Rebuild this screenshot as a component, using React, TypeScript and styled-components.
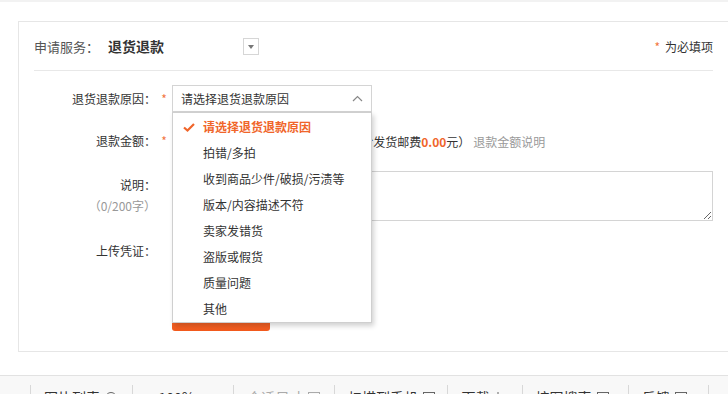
import React from "react";
import styled, { createGlobalStyle } from "styled-components";

const Global = createGlobalStyle`
  html, body { margin: 0; padding: 0; overflow: hidden; background: #fff; }
  body { font-family: "Noto Sans CJK SC", "Noto Sans", sans-serif; font-size: 12px; color: #333; }
  * { box-sizing: border-box; }
`;

const Page = styled.div`
  width: 728px;
  height: 394px;
  border-top: 2px solid #f2f2f2;
  overflow: hidden;
`;

const Wrap = styled.div`
  padding: 19px 0 0 18px;
`;

const Card = styled.div`
  width: 712px;
  border: 1px solid #e6e6e6;
  padding: 0 16px 20px 15px;
`;

const Header = styled.div`
  height: 49px;
  display: flex;
  align-items: center;
  border-bottom: 1px solid #e8e8e8;
`;

const HeadLabel = styled.span`
  font-size: 13px;
  color: #555;
  width: 74px;
`;

const HeadValue = styled.span`
  font-size: 14px;
  font-weight: bold;
  color: #333;
  width: 135px;
`;

const MiniSelect = styled.span`
  width: 16px;
  height: 17px;
  border: 1px solid #d6d6d6;
  display: flex;
  align-items: center;
  justify-content: center;
  margin-top: 1px;
  &::after {
    content: "";
    border-left: 3px solid transparent;
    border-right: 3px solid transparent;
    border-top: 4px solid #777;
  }
`;

const Required = styled.span`
  margin-left: auto;
  font-size: 12px;
  color: #333;
  display: flex;
  align-items: center;
  gap: 5px;
`;

const Star = styled.span`
  color: #f2773f;
  font-size: 12px;
`;

const Form = styled.div`
  padding-top: 14px;
`;

const Row = styled.div<{ $mt?: number; $align?: string }>`
  display: flex;
  align-items: ${(p) => p.$align || "center"};
  margin-top: ${(p) => p.$mt || 0}px;
`;

const Label = styled.div<{ $pt?: number }>`
  width: 122px;
  text-align: right;
  font-size: 12px;
  line-height: 20px;
  color: #333;
  padding-top: ${(p) => p.$pt || 0}px;
`;

const Sub = styled.div`
  color: #999;
  line-height: 22px;
`;

const StarCol = styled.div`
  width: 16px;
  text-align: center;
  line-height: 20px;
  color: #f2773f;
`;

const SelectWrap = styled.div`
  position: relative;
  width: 200px;
`;

const SelectBox = styled.div`
  height: 27px;
  border: 1px solid #d4d4d4;
  display: flex;
  align-items: center;
  padding: 0 8px 0 8px;
  justify-content: space-between;
  color: #333;
`;

const Menu = styled.ul`
  position: absolute;
  left: 0;
  top: 27px;
  width: 200px;
  margin: 0;
  padding: 1px 0 0;
  list-style: none;
  background: #fff;
  border: 1px solid #cfcfcf;
  box-shadow: 2px 3px 5px rgba(0, 0, 0, 0.18);
  z-index: 10;
`;

const Item = styled.li<{ $active?: boolean }>`
  position: relative;
  height: 26px;
  line-height: 26px;
  padding-left: 30px;
  font-size: 12px;
  color: ${(p) => (p.$active ? "#f0652a" : "#333")};
  font-weight: ${(p) => (p.$active ? "bold" : "normal")};
`;

const Check = styled.svg`
  position: absolute;
  left: 10px;
  top: 9px;
`;

const Field = styled.div`
  display: flex;
  align-items: center;
  gap: 6px;
`;

const Input = styled.div`
  width: 86px;
  height: 26px;
  border: 1px solid #d4d4d4;
`;

const Money = styled.b`
  color: #f0652a;
`;

const Muted = styled.span`
  color: #999;
  margin-left: -3px;
`;

const TextArea = styled.textarea`
  width: 541px;
  height: 50px;
  border: 1px solid #d4d4d4;
  margin: 0;
  padding: 4px;
  font-family: inherit;
  font-size: 12px;
`;

const UploadBtn = styled.div`
  width: 90px;
  height: 26px;
  border: 1px solid #d4d4d4;
`;

const Submit = styled.div`
  width: 98px;
  height: 30px;
  border-radius: 3px;
  background: linear-gradient(#ff7a3d, #f25a1d);
  margin-left: 138px;
`;

const Toolbar = styled.div`
  margin-top: 23px;
  border-top: 1px solid #e2e2e2;
  background: #f8f8f8;
  height: 20px;
  padding: 9px 0 0 30px;
  display: flex;
`;

const Tool = styled.div<{ $dim?: boolean; $w: number }>`
  width: ${(p) => p.$w}px;
  height: 30px;
  border-left: 1px solid #d8d8d8;
  display: flex;
  gap: 5px;
  padding-left: 13px;
  align-items: flex-start;
  font-size: 14px;
  line-height: 20px;
  padding-top: 2px;
  color: ${(p) => (p.$dim ? "#aaa" : "#333")};
  svg { margin-top: 5px; flex: none; }
`;

const reasons = [
  "请选择退货退款原因",
  "拍错/多拍",
  "收到商品少件/破损/污渍等",
  "版本/内容描述不符",
  "卖家发错货",
  "盗版或假货",
  "质量问题",
  "其他",
];

const Sq = ({ c = "#666" }: { c?: string }) => (
  <svg width="12" height="12" viewBox="0 0 12 12">
    <rect x="0.5" y="0.5" width="11" height="11" fill="none" stroke={c} />
  </svg>
);

export default function App() {
  return (
    <Page>
      <Global />
      <Wrap>
        <Card>
          <Header>
            <HeadLabel>申请服务：</HeadLabel>
            <HeadValue>退货退款</HeadValue>
            <MiniSelect />
            <Required>
              <Star>*</Star>为必填项
            </Required>
          </Header>
          <Form>
            <Row>
              <Label>退货退款原因：</Label>
              <StarCol>*</StarCol>
              <SelectWrap>
                <SelectBox>
                  <span>请选择退货退款原因</span>
                  <svg width="11" height="7" viewBox="0 0 11 7">
                    <path d="M1 6 L5.5 1.5 L10 6" fill="none" stroke="#888" strokeWidth="1.2" />
                  </svg>
                </SelectBox>
                <Menu>
                  {reasons.map((r, i) => (
                    <Item key={r} $active={i === 0}>
                      {i === 0 && (
                        <Check width="12" height="9" viewBox="0 0 12 9">
                          <path d="M1 4.5 L4.5 7.5 L11 1" fill="none" stroke="#f0652a" strokeWidth="2.2" />
                        </Check>
                      )}
                      {r}
                    </Item>
                  ))}
                </Menu>
              </SelectWrap>
            </Row>
            <Row $mt={16}>
              <Label>退款金额：</Label>
              <StarCol>*</StarCol>
              <Field>
                <Input />
                <span>
                  元（最多<Money>0.00</Money>元，含发货邮费<Money>0.00</Money>元）
                </span>
                <Muted>退款金额说明</Muted>
              </Field>
            </Row>
            <Row $mt={17} $align="flex-start">
              <Label $pt={4}>
                说明：
                <Sub>（0/200字）</Sub>
              </Label>
              <StarCol />
              <TextArea />
            </Row>
            <Row $mt={17}>
              <Label>上传凭证：</Label>
              <StarCol />
              <UploadBtn />
            </Row>
            <Row $mt={37}>
              <Submit />
            </Row>
          </Form>
        </Card>
      </Wrap>
      <Toolbar>
        <Tool $w={103}>
          图片列表
          <svg width="12" height="12" viewBox="0 0 12 12">
            <circle cx="6" cy="6" r="5.5" fill="none" stroke="#666" />
            <path d="M3.5 5 L6 7.5 L8.5 5" fill="none" stroke="#666" />
          </svg>
        </Tool>
        <Tool $w={103}>
          <span>+</span>
          <span>100%</span>
          <span>−</span>
        </Tool>
        <Tool $w={102} $dim>
          合适尺寸
          <Sq c="#aaa" />
        </Tool>
        <Tool $w={115}>
          扫描到手机
          <Sq />
        </Tool>
        <Tool $w={75}>
          下载
          <svg width="8" height="12" viewBox="0 0 8 12">
            <path d="M4 0 V10 M1 7 L4 10 L7 7" fill="none" stroke="#666" />
          </svg>
        </Tool>
        <Tool $w={108}>
          按图搜索
          <Sq />
        </Tool>
        <Tool $w={81}>
          反馈
          <Sq />
        </Tool>
        <Tool $w={20} />
      </Toolbar>
    </Page>
  );
}
